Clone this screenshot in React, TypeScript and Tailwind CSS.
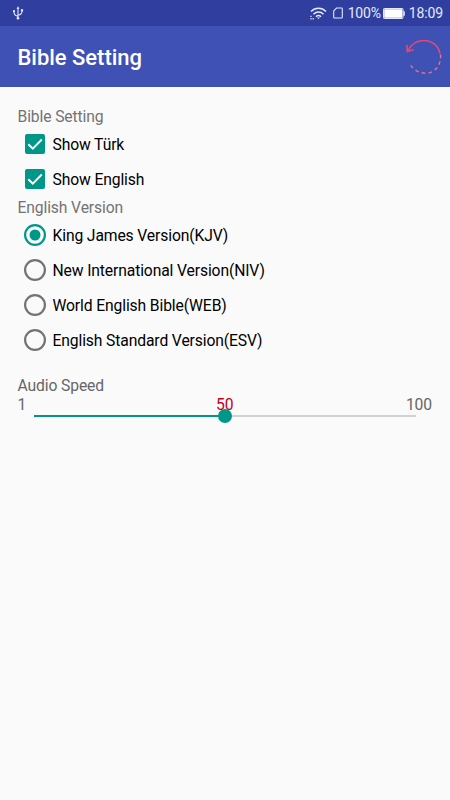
import { useState } from 'react';

const versions = [
  'King James Version(KJV)',
  'New International Version(NIV)',
  'World English Bible(WEB)',
  'English Standard Version(ESV)',
];

function StatusBar() {
  return (
    <div className="flex h-[26px] items-center justify-between bg-[#303f9f] pr-[7px] pl-3 text-[#e4e8fb]">
      <svg className="h-[14px] w-3" viewBox="0 0 12 14" fill="none" stroke="currentColor" strokeWidth="1.1">
        <path d="M6 2v10M6 10.2C3 9.7 2 8.6 2 6M6 9.2c3-.5 4-1.6 4-4.2" />
        <path d="M6 .3 7.5 2.8h-3z" fill="currentColor" stroke="none" />
        <circle cx="6" cy="12.3" r="1.3" fill="currentColor" stroke="none" />
        <circle cx="2" cy="5.2" r="1.1" fill="currentColor" stroke="none" />
        <path d="M8.9 3.2h2.2v2.2H8.9z" fill="currentColor" stroke="none" />
      </svg>
      <div className="flex items-center">
        <svg className="h-[13px] w-[17px]" viewBox="0 0 17 13" fill="none" stroke="currentColor" strokeWidth="1.5">
          <path d="M1 4.5C5.2.3 11.8.3 16 4.5M3.5 7.2c2.8-2.8 7.2-2.8 10 0M6 9.7c1.5-1.4 3.5-1.4 5 0" />
          <path d="M7 10.5h3L8.5 12z" fill="currentColor" stroke="none" />
          <path d="M1 8.7v1.4M1 11v1.4M3.2 11v1.4" strokeWidth="1.2" />
        </svg>
        <svg className="ml-[6px] h-3 w-[10px]" viewBox="0 0 10 12" fill="none" stroke="currentColor" strokeWidth="1.1">
          <path d="M3.6 1h4.9a.8.8 0 0 1 .8.8v8.4a.8.8 0 0 1-.8.8h-7a.8.8 0 0 1-.8-.8V3.9z" />
        </svg>
        <span className="ml-[5px] w-[34px] text-[14px] leading-none whitespace-nowrap">100%</span>
        <svg className="ml-[1px] h-[11px] w-[22px]" viewBox="0 0 22 11" fill="none">
          <rect x=".5" y=".5" width="19.5" height="10" rx=".7" stroke="currentColor" />
          <path d="M1.2 1.2h18.100v8.600H1.2z" fill="#fff" />
          <path d="M20.3 3.2h1.5v4.6h-1.5z" fill="currentColor" />
        </svg>
        <span className="ml-1 text-[14px] leading-none tracking-[-0.1px]">18:09</span>
      </div>
    </div>
  );
}

function ResetIcon() {
  return (
    <svg className="h-10 w-10" viewBox="0 0 40 40" fill="none" stroke="#e34877" strokeWidth="1.6">
      <path d="M4 14C7 7 13 3.5 20 3.5c8 0 14.500 5.500 16 13" />
      <path d="m2.800 8 .5 6.500 6.400-1.700" />
      <path d="M36.500 17.500C37.500 28 31 36 22 36.200 15 36.300 9.500 33 5.800 27" stroke="#e57387" strokeWidth="1.400" strokeDasharray="3.600 3.200" />
    </svg>
  );
}

function CheckRow({ label }: { label: string }) {
  const [checked, setChecked] = useState(true);

  return (
    <button
      type="button"
      role="checkbox"
      aria-checked={checked}
      onClick={() => setChecked(!checked)}
      className="flex h-[35px] items-center gap-[7.5px] pl-[7px] text-left"
    >
      <svg className="h-5 w-5" viewBox="0 0 20 20" fill="none">
        {checked ? (
          <>
            <rect width="20" height="20" rx="2" fill="#009688" />
            <path d="m3.300 10.200 4.500 4.500 9-9.200" stroke="#fafafa" strokeWidth="2" />
          </>
        ) : (
          <rect x="1" y="1" width="18" height="18" rx="2" stroke="#757575" strokeWidth="2" />
        )}
      </svg>
      <span className="pt-[2px]">{label}</span>
    </button>
  );
}

export default function App() {
  const [version, setVersion] = useState(versions[0]);
  const speed = 50;

  return (
    <div className="h-[800px] w-[450px] overflow-hidden bg-[#fafafa] font-['Roboto',sans-serif] text-[15.700px] leading-[19px] tracking-[-0.13px] text-black">
      <StatusBar />
      <header className="flex h-[61px] items-center justify-between bg-[#3f51b5] pr-[6px] pl-[17.500px]">
        <h1 className="pt-[2px] text-[22px] leading-none font-medium tracking-[-0.03px] text-white">Bible Setting</h1>
        <ResetIcon />
      </header>

      <main className="flex flex-col pt-5">
        <h2 className="pl-[17.500px] text-[#737373]">Bible Setting</h2>
        <div className="flex flex-col pl-[18px]">
          <CheckRow label="Show Türk" />
          <CheckRow label="Show English" />
        </div>

        <h2 className="mt-[2px] pl-[17.500px] text-[#737373]">English Version</h2>
        <div role="radiogroup" className="flex flex-col pl-6">
          {versions.map((name) => (
            <button
              key={name}
              type="button"
              role="radio"
              aria-checked={name === version}
              onClick={() => setVersion(name)}
              className="flex h-[35px] items-center gap-[6.500px] text-left"
            >
              <svg className="h-[22px] w-[22px]" viewBox="0 0 22 22" fill="none">
                <circle cx="11" cy="11" r="9.900" stroke={name === version ? '#009688' : '#737373'} strokeWidth="2.200" />
                {name === version && <circle cx="11" cy="11" r="5.500" fill="#009688" />}
              </svg>
              <span className="pt-[2px]">{name}</span>
            </button>
          ))}
        </div>

        <h2 className="mt-[19px] pl-[17.500px] text-[#666666]">Audio Speed</h2>
        <div className="grid grid-cols-3 pr-[18px] pl-[17.500px] text-[#666666]">
          <span>1</span>
          <span className="text-center text-[#c4001a]">{speed}</span>
          <span className="text-right">100</span>
        </div>
        <div className="-mt-[5px] flex h-[14px] items-center pr-[34px] pl-[34px]">
          <div className="h-[2px] bg-[#009688]" style={{ width: `${speed}%` }} />
          <div className="z-10 -mx-[7px] h-[14px] w-[14px] shrink-0 rounded-full bg-[#009688]" />
          <div className="h-[2px] flex-1 bg-[#d2d2d2]" />
        </div>
      </main>
    </div>
  );
}
